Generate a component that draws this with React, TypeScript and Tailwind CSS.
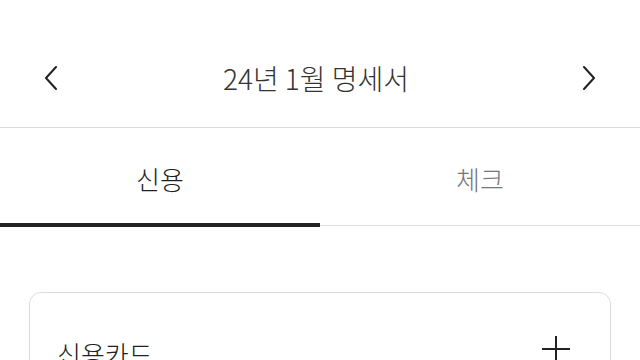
import React from "react";

const font = { fontFamily: '"Noto Sans CJK KR", "Noto Sans", sans-serif' };

function Chevron({ dir }: { dir: "left" | "right" }) {
  return (
    <svg width="14" height="24" viewBox="0 0 14 24" fill="none" stroke="#222" strokeWidth="2" strokeLinecap="round" strokeLinejoin="round">
      {dir === "left" ? <polyline points="12,1 2,12 12,23" /> : <polyline points="2,1 12,12 2,23" />}
    </svg>
  );
}

export default function App() {
  return (
    <div className="w-[640px] h-[360px] bg-white overflow-hidden font-light" style={font}>
      <header className="h-[128px] pt-[28px] flex items-center px-[44px] border-b border-[#dcdcdc]">
        <button className="w-[14px] flex items-center"><Chevron dir="left" /></button>
        <h1 className="flex-1 text-center text-[28px] leading-none text-[#333] font-light pr-[8px]">24년 1월 명세서</h1>
        <button className="w-[14px] flex items-center"><Chevron dir="right" /></button>
      </header>
      <nav className="flex">
        <div className="flex-1 flex flex-col">
          <div className="h-[95px] pt-[5px] flex items-center justify-center text-[26px] text-[#222]">신용</div>
          <div className="h-[4px] bg-[#222]" />
        </div>
        <div className="flex-1 flex flex-col">
          <div className="h-[95px] pt-[5px] flex items-center justify-center text-[26px] text-[#777]">체크</div>
          <div className="h-[4px] flex items-center"><div className="h-[1px] w-full bg-[#dcdcdc]" /></div>
        </div>
      </nav>
      <section className="mt-[65px] mx-[29px] border border-[#dcdcdc] rounded-[12px] pt-[43px] px-[27px] pb-[30px]">
        <div className="flex items-start justify-between">
          <span className="text-[26px] leading-[36px] text-[#222]">신용카드</span>
          <svg width="28" height="28" viewBox="0 0 28 28" className="mr-[13px]" stroke="#222" strokeWidth="2">
            <line x1="14" y1="0" x2="14" y2="28" />
            <line x1="0" y1="13" x2="28" y2="13" />
          </svg>
        </div>
      </section>
    </div>
  );
}
